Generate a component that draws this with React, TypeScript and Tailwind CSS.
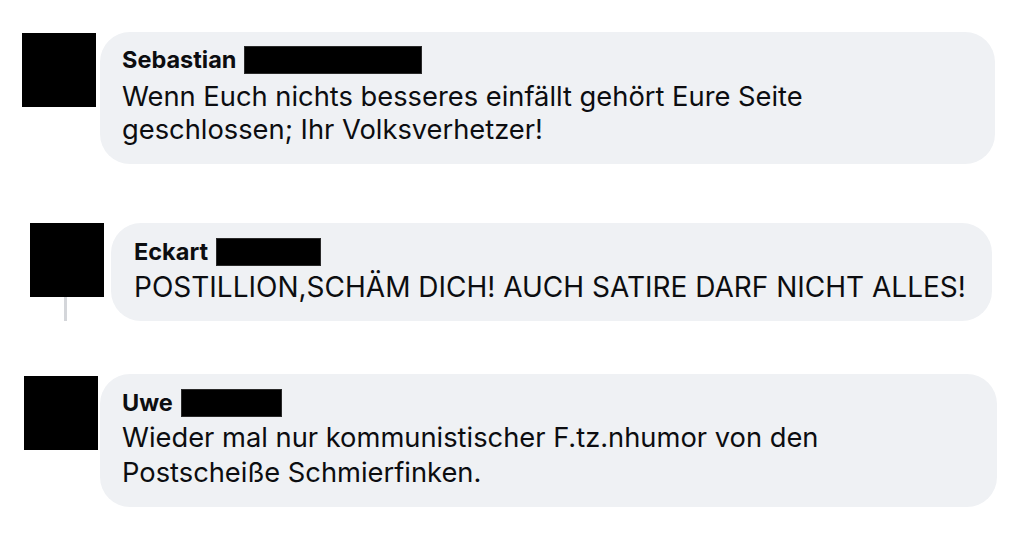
const font = { fontFamily: "Inter, 'Liberation Sans', sans-serif" }

type Comment = {
  name: string
  redactW: number
  lines: string[]
  rowCls: string
  avatarCls: string
  bubbleCls: string
  nameCls: string
  bodyCls: string
  thread?: boolean
}

const comments: Comment[] = [
  {
    name: "Sebastian",
    redactW: 178,
    lines: ["Wenn Euch nichts besseres einfällt gehört Eure Seite", "geschlossen; Ihr Volksverhetzer!"],
    rowCls: "mt-[32px]",
    avatarCls: "ml-[22px] mt-[1px]",
    bubbleCls: "ml-[4px] w-[895px] pl-[22px] pt-[8px] pb-[18px]",
    nameCls: "h-[40px] leading-[40px]",
    bodyCls: "text-[27.3px] leading-[33px]",
  },
  {
    name: "Eckart",
    redactW: 105,
    lines: ["POSTILLION,SCHÄM DICH! AUCH SATIRE DARF NICHT ALLES!"],
    rowCls: "mt-[59px]",
    avatarCls: "ml-[30px]",
    bubbleCls: "ml-[7px] w-[881px] pl-[23px] pt-[10px] pb-[17px]",
    nameCls: "h-[37px] leading-[37px]",
    bodyCls: "text-[28px] leading-[34px]",
    thread: true,
  },
  {
    name: "Uwe",
    redactW: 101,
    lines: ["Wieder mal nur kommunistischer F.tz.nhumor von den", "Postscheiße Schmierfinken."],
    rowCls: "mt-[53px]",
    avatarCls: "ml-[24px] mt-[2px]",
    bubbleCls: "ml-[2px] w-[897px] pl-[22px] pt-[12px] pb-[17px]",
    nameCls: "h-[34px] leading-[34px]",
    bodyCls: "text-[27.3px] leading-[35px]",
  },
]

function Row({ c }: { c: Comment }) {
  return (
    <div className={`flex items-start ${c.rowCls}`}>
      <div className={`flex flex-col items-center shrink-0 ${c.avatarCls}`}>
        <div className="w-[74px] h-[74px] bg-black" />
        {c.thread && <div className="w-[3px] h-[24px] bg-[#d4d6da] -ml-[4px]" />}
      </div>
      <div className={`rounded-[30px] bg-[#eff1f4] pr-4 shrink-0 ${c.bubbleCls}`}>
        <div className={`flex items-center gap-[8px] ${c.nameCls}`}>
          <span className="text-[23.5px] font-bold text-[#0c0d10]">{c.name}</span>
          <span className="h-[28px] bg-black border border-[#2a2a2a]" style={{ width: c.redactW }} />
        </div>
        <div className={`text-[#0c0d10] ${c.bodyCls}`}>
          {c.lines.map((l) => (
            <div key={l} className="whitespace-nowrap">{l}</div>
          ))}
        </div>
      </div>
    </div>
  )
}

export default function App() {
  return (
    <div className="w-[1024px] h-[538px] bg-white overflow-hidden flex flex-col" style={font}>
      {comments.map((c) => (
        <Row key={c.name} c={c} />
      ))}
    </div>
  )
}
